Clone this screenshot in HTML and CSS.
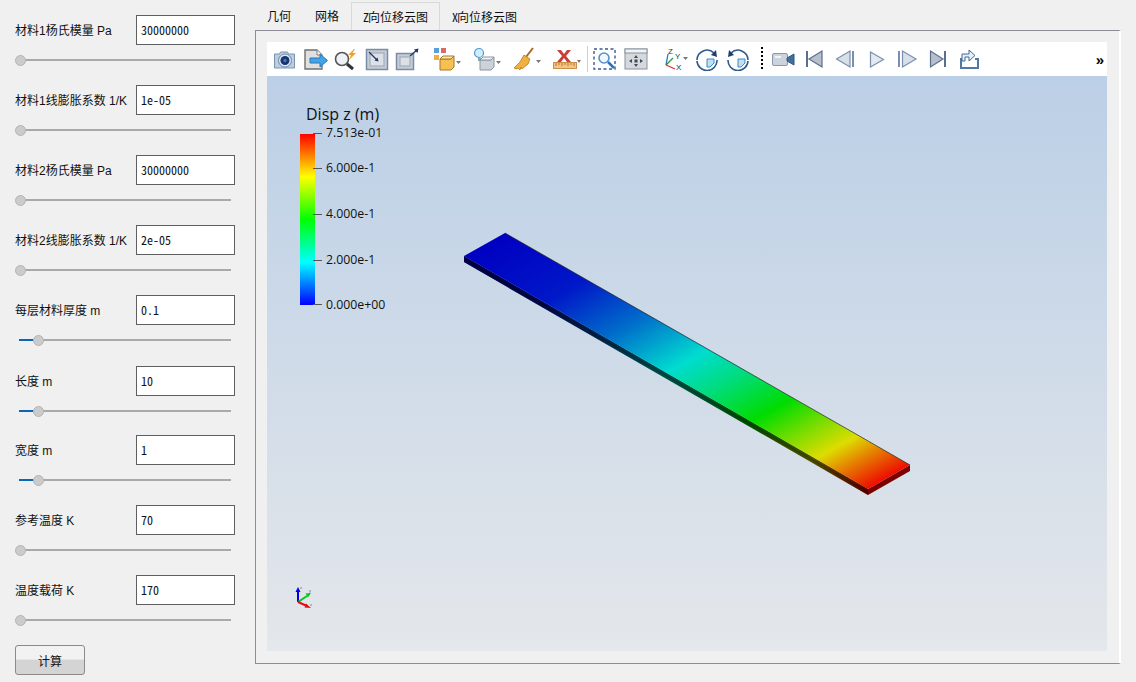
FILE: index.html
```html
<!DOCTYPE html>
<html lang="zh">
<head>
<meta charset="utf-8">
<title>Z向位移云图</title>
<link rel="stylesheet" href="styles.css">
</head>
<body>
<div class="app">
  <aside class="params">
    <div class="param"><div class="param-head"><label class="param-label">材料1杨氏模量 Pa</label><input class="param-input" value="30000000"></div><div class="slider"><div class="track"></div><div class="thumb"></div></div></div>
    <div class="param"><div class="param-head"><label class="param-label">材料1线膨胀系数 1/K</label><input class="param-input" value="1e-05"></div><div class="slider"><div class="track"></div><div class="thumb"></div></div></div>
    <div class="param"><div class="param-head"><label class="param-label">材料2杨氏模量 Pa</label><input class="param-input" value="30000000"></div><div class="slider"><div class="track"></div><div class="thumb"></div></div></div>
    <div class="param"><div class="param-head"><label class="param-label">材料2线膨胀系数 1/K</label><input class="param-input" value="2e-05"></div><div class="slider"><div class="track"></div><div class="thumb"></div></div></div>
    <div class="param param-tall"><div class="param-head"><label class="param-label">每层材料厚度 m</label><input class="param-input" value="0.1"></div><div class="slider"><div class="track"><div class="fill"></div></div><div class="thumb thumb-set"></div></div></div>
    <div class="param param-short"><div class="param-head"><label class="param-label">长度 m</label><input class="param-input" value="10"></div><div class="slider"><div class="track"><div class="fill"></div></div><div class="thumb thumb-set"></div></div></div>
    <div class="param"><div class="param-head"><label class="param-label">宽度 m</label><input class="param-input" value="1"></div><div class="slider"><div class="track"><div class="fill"></div></div><div class="thumb thumb-set"></div></div></div>
    <div class="param"><div class="param-head"><label class="param-label">参考温度 K</label><input class="param-input" value="70"></div><div class="slider"><div class="track"></div><div class="thumb"></div></div></div>
    <div class="param"><div class="param-head"><label class="param-label">温度载荷 K</label><input class="param-input" value="170"></div><div class="slider"><div class="track"></div><div class="thumb"></div></div></div>
    <button class="calc">计算</button>
  </aside>

  <main class="workspace">
    <nav class="tabs">
      <div class="tab">几何</div>
      <div class="tab">网格</div>
      <div class="tab tab-active"><span class="tab-latin">Z</span>向位移云图</div>
      <div class="tab"><span class="tab-latin">X</span>向位移云图</div>
    </nav>
    <section class="pane">
      <div class="toolbar">
        <div class="group group-a">
          <svg class="ic" viewBox="0 0 24 24"><path d="M1.500 7h5l1-2h7l1 2h6v14h-20z" fill="#b9cde3" stroke="#7b93b3"/><circle cx="12" cy="13.500" r="6.500" fill="#dfe8f2" stroke="#6f87a8"/><circle cx="12" cy="13.500" r="4.500" fill="#17366f"/><circle cx="12" cy="13.500" r="1.700" fill="#4a76b8"/></svg>
          <svg class="ic" viewBox="0 0 24 24"><path d="M1 3h12l5 5v14H1z" fill="#e0e0e0" stroke="#707070" stroke-width="1.400"/><path d="M13 3v5h5" fill="#f4f4f4" stroke="#808080"/><path d="M6 11h10V7l7.500 6.500L16 20v-4H6z" fill="#43a3e6" stroke="#2878b8"/></svg>
          <svg class="ic" viewBox="0 0 24 24"><circle cx="8" cy="12" r="6.500" fill="#eef2f6" stroke="#555" stroke-width="1.600"/><path d="M13 17l6 5" stroke="#333" stroke-width="3"/><path d="M20 2l-6 6h3l-2 5 7-7h-3.500l2.500-4z" fill="#f0a030"/></svg>
          <svg class="ic" viewBox="0 0 24 24"><rect x="1.500" y="2.500" width="21" height="20" fill="#c6ccd6" stroke="#7b8ca8" stroke-width="1.500"/><rect x="5" y="6" width="14" height="13" fill="#dde0e5" stroke="#9aa5b5"/><path d="M4 5l8 8" stroke="#1f3763" stroke-width="1.300"/><path d="M13.500 14.500l-4-1 3-3z" fill="#1f3763"/></svg>
          <svg class="ic" viewBox="0 0 24 24"><rect x="1.500" y="6.500" width="17" height="16" fill="#c6ccd6" stroke="#7b8ca8" stroke-width="1.500"/><rect x="5" y="10" width="10" height="9" fill="#dde0e5" stroke="#9aa5b5"/><path d="M15 9l7-6" stroke="#1f3763" stroke-width="1.300"/><path d="M23.500 1.500l-1 4.500-3.500-3.500z" fill="#1f3763"/></svg>
        </div>
        <div class="group group-b">
          <svg class="ic-wide" viewBox="0 0 28 24"><rect x="1" y="1" width="5" height="5" fill="#5aa0d8"/><rect x="8" y="1" width="5" height="5" fill="#d86a6a"/><rect x="1" y="8" width="5" height="5" fill="#f0b040"/><path d="M7 12h11l3-3v11l-3 3H7z" fill="#f8c050" stroke="#a07830"/><path d="M7 12l3-3h11l-3 3z" fill="#fde6a8" stroke="#a07830"/><path d="M23 14h5l-2.500 3z" fill="#777"/></svg>
          <svg class="ic-wide" viewBox="0 0 28 24"><circle cx="6" cy="6" r="4.500" fill="#d4ecfb" stroke="#4a9bd8" stroke-width="1.200"/><path d="M5 11h3v3H5z" fill="#8aa"/><path d="M7 13h11l3-3v10l-3 3H7z" fill="#ccd2d8" stroke="#8a96a2"/><path d="M7 13l3-3h11l-3 3z" fill="#eef1f4" stroke="#8a96a2"/><path d="M23 14h5l-2.500 3z" fill="#777"/></svg>
          <svg class="ic-wide" viewBox="0 0 28 24"><path d="M20 1l-7 9" stroke="#a8682a" stroke-width="2"/><path d="M11 8l6 4-2 5-6 5-1-2-1 3-2-2-2 1-2-1 6-6z" fill="#f2b040" stroke="#b07a20" stroke-width=".8"/><path d="M23 13h5l-2.500 3z" fill="#777"/></svg>
          <svg class="ic-wide" viewBox="0 0 28 24"><path d="M4 3h4l3 4 3-4h4l-5 6 5 6h-4l-3-4-3 4H4l5-6z" fill="#c8403a"/><rect x="0.500" y="15.500" width="23" height="6" fill="#f5c282" stroke="#c89048"/><path d="M3 16v3M6 16v2M9 16v3M12 16v2M15 16v3M18 16v2M21 16v3" stroke="#b07830"/><path d="M24 13h4l-2 3z" fill="#777"/></svg>
        </div>
        <div class="sep"></div>
        <div class="group group-c">
          <svg class="ic" viewBox="0 0 24 24"><rect x="1" y="2" width="21" height="20" fill="none" stroke="#3a5a90" stroke-width="1.400" stroke-dasharray="3 2.500"/><circle cx="11" cy="11" r="5" fill="#f0f6fb" stroke="#5a90c8" stroke-width="1.600"/><path d="M15 15l6 6" stroke="#2f74b8" stroke-width="2.500"/></svg>
          <svg class="ic" viewBox="0 0 24 24"><rect x="1" y="2" width="22" height="20" fill="#d6d8dc" stroke="#8892a2"/><rect x="1" y="2" width="22" height="4" fill="#f2f3f5" stroke="#8892a2"/><path d="M12 8l-2 3h4zM12 20l-2-3h4zM5 14l3-2v4zM19 14l-3-2v4z" fill="#3c4c62"/><rect x="10.500" y="12.500" width="3" height="3" fill="#3c4c62"/></svg>
        </div>
        <svg class="ic-axes" viewBox="0 0 27 24"><path d="M3 18L5 7" stroke="#2a7ac0" stroke-width="1.300"/><path d="M3 18l7-7" stroke="#2a9a40" stroke-width="1.300"/><path d="M3 18l9 4" stroke="#d83030" stroke-width="1.300"/><text class="axis-mini" x="5" y="7">Z</text><text class="axis-mini" x="12" y="12">Y</text><text class="axis-mini" x="13" y="23">X</text><path d="M20 10h5l-2.500 3z" fill="#777"/></svg>
        <div class="group group-rot">
          <svg class="ic" viewBox="0 0 24 24"><path d="M2 13a10 10 0 0 1 17-7M22 13a10 10 0 0 1-20 1" fill="none" stroke="#2e5a90" stroke-width="1.600"/><path d="M22 10l-6-2 5-5z" fill="#1f3f70"/><path d="M12 12h7v4l-4 4h-3z" fill="#bfe0f4" stroke="#3e8ac0"/></svg>
          <svg class="ic" viewBox="0 0 24 24"><path d="M22 13a10 10 0 0 0-17-7M2 13a10 10 0 0 0 20 1" fill="none" stroke="#2e5a90" stroke-width="1.600"/><path d="M2 10l6-2-5-5z" fill="#1f3f70"/><path d="M12 12h7v4l-4 4h-3z" fill="#bfe0f4" stroke="#3e8ac0"/></svg>
        </div>
        <div class="dots"></div>
        <svg class="ic-video" viewBox="0 0 26 24"><rect x="2.500" y="6.500" width="15" height="12" rx="1.500" fill="#ccd3dc" stroke="#8a98aa"/><rect x="5" y="9" width="6" height="2" fill="#f2f4f6"/><path d="M17 11l7-4v11l-7-4z" fill="#3f6f9f" stroke="#30567e"/></svg>
        <div class="group group-play">
          <svg class="ic" viewBox="0 0 24 24"><path d="M5 4v16" stroke="#5a6f8c" stroke-width="2"/><path d="M20 4v16L7 12z" fill="#b6bfcb" stroke="#5a6f8c" stroke-width="1.200"/></svg>
          <svg class="ic" viewBox="0 0 24 24"><path d="M17 4v16L3.500 12z" fill="#d8dfe8" stroke="#7a8fae" stroke-width="1.200"/><path d="M20 4v16" stroke="#7a8fae" stroke-width="2"/></svg>
          <svg class="ic" viewBox="0 0 24 24"><path d="M6.500 5v15L19.500 12.500z" fill="#e4e9f0" stroke="#7a8fae" stroke-width="1.200"/></svg>
          <svg class="ic" viewBox="0 0 24 24"><path d="M4 4v16" stroke="#7a8fae" stroke-width="2"/><path d="M7.500 4v16L21 12z" fill="#d8dfe8" stroke="#7a8fae" stroke-width="1.200"/></svg>
          <svg class="ic" viewBox="0 0 24 24"><path d="M4.500 4v16L17 12z" fill="#b6bfcb" stroke="#5a6f8c" stroke-width="1.200"/><path d="M19 4v16" stroke="#5a6f8c" stroke-width="2"/></svg>
          <svg class="ic" viewBox="0 0 24 24"><path d="M4 11v10h17v-9h-3" fill="none" stroke="#4f7aa8" stroke-width="2"/><path d="M5 14V7h7V3l6 5.500-6 5.500v-4H8v4z" fill="#e6eef6" stroke="#3f6a98"/></svg>
        </div>
        <div class="more">»</div>
      </div>
      <div class="render">
        <svg class="scene" viewBox="267 76 840 575">
          <defs>
            <linearGradient id="dispTop" gradientUnits="userSpaceOnUse" x1="464" y1="256" x2="660" y2="606">
              <stop offset="0" stop-color="#0000c2"/>
              <stop offset=".2" stop-color="#0018c8"/>
              <stop offset=".35" stop-color="#006cca"/>
              <stop offset=".5" stop-color="#00dcd0"/>
              <stop offset=".6" stop-color="#00dc78"/>
              <stop offset=".71" stop-color="#00dc00"/>
              <stop offset=".8" stop-color="#80dc00"/>
              <stop offset=".87" stop-color="#dedc00"/>
              <stop offset=".93" stop-color="#e67800"/>
              <stop offset="1" stop-color="#ee0a00"/>
            </linearGradient>
            <linearGradient id="legendBar" x1="0" y1="0" x2="0" y2="1">
              <stop offset="0" stop-color="#ff0000"/>
              <stop offset=".25" stop-color="#ffff00"/>
              <stop offset=".5" stop-color="#00ff00"/>
              <stop offset=".75" stop-color="#00ffff"/>
              <stop offset="1" stop-color="#0000ff"/>
            </linearGradient>
          </defs>
          <text class="legend-title" x="306" y="120">Disp z (m)</text>
          <rect x="300" y="134" width="15" height="171" fill="url(#legendBar)"/>
          <path class="legend-ticks" d="M313 133.500h9M313 168.500h9M313 214.500h9M313 260.500h9M313 304.500h9"/>
          <text class="legend-label" x="326" y="137">7.513e-01</text>
          <text class="legend-label" x="326" y="172">6.000e-1</text>
          <text class="legend-label" x="326" y="218">4.000e-1</text>
          <text class="legend-label" x="326" y="264">2.000e-1</text>
          <text class="legend-label" x="326" y="309">0.000e+00</text>

          <polygon points="464,256 868,489 868,495 464,262" fill="url(#dispTop)"/>
          <polygon points="464,256 868,489 868,495 464,262" fill="#000" opacity=".66"/>
          <polygon points="868,489 910,465 910,471 868,495" fill="#7c0000"/>
          <polygon points="464,256 505,233 910,465 868,489" fill="url(#dispTop)"/>
          <path d="M505 233L910 465" stroke="#222" stroke-width=".7" fill="none"/>
          <path d="M464 259L868 492" stroke="#000" stroke-width=".6" opacity=".4" fill="none"/>

          <path d="M298 602V590" stroke="#0000f0" stroke-width="2"/>
          <path d="M298 587l-2.500 5h5z" fill="#0000f0"/>
          <path d="M298 602l9-6" stroke="#10c020" stroke-width="2"/>
          <path d="M311 593l-5.500 .5 2.500 4z" fill="#10c020"/>
          <path d="M298 602l9 4" stroke="#e01010" stroke-width="2"/>
          <path d="M311 608l-5-4.500-1.500 4z" fill="#e01010"/>
          <text class="axis-tiny" x="300" y="589">z</text>
          <text class="axis-tiny" x="309" y="592">y</text>
          <text class="axis-tiny" x="310" y="606">x</text>
        </svg>
      </div>
    </section>
  </main>
</div>
</body>
</html>
```

FILE: styles.css
```css
* { box-sizing: border-box; }

html, body {
  margin: 0;
  width: 1136px;
  height: 682px;
  overflow: hidden;
  background: #f0f0f0;
}

body {
  font-family: "Liberation Sans", "Noto Sans CJK SC", sans-serif;
  font-size: 12px;
  color: #111;
}

.app {
  display: flex;
  height: 682px;
}

/* parameter column */
.params {
  width: 255px;
  flex: none;
  padding: 15px 0 0 15px;
}

.param {
  height: 70px;
}

.param-tall { height: 71px; }
.param-short { height: 69px; }

.param-head {
  display: flex;
  align-items: center;
  justify-content: space-between;
  width: 220px;
  height: 30px;
}

.param-label {
  white-space: nowrap;
  padding-bottom: 2px;
}

.param-input {
  width: 99px;
  height: 30px;
  padding: 0 0 2px 4px;
  border: 1px solid #5f5f5f;
  border-radius: 0;
  background: #fff;
  color: #111;
  font-family: "Noto Sans CJK SC", sans-serif;
  font-size: 12px;
  font-feature-settings: "hwid" 1;
  outline: none;
}

.slider {
  position: relative;
  width: 216px;
  height: 12px;
  margin-top: 9px;
  display: flex;
  align-items: center;
}

.track {
  width: 212px;
  height: 2px;
  margin-left: 4px;
  background: #a9a9a9;
}

.fill {
  width: 14px;
  height: 2px;
  background: #0b66b5;
}

.thumb {
  position: absolute;
  left: 0;
  top: 1px;
  width: 11px;
  height: 11px;
  border-radius: 50%;
  border: 1px solid #b4b4b4;
  background: #cbcbcb;
}

.thumb-set { left: 18px; }

.calc {
  display: block;
  width: 70px;
  height: 30px;
  padding: 0;
  border: 1px solid #8a8a8a;
  border-radius: 3px;
  background: linear-gradient(#f2f2f2 0, #f2f2f2 47%, #d4d4d4 50%, #d4d4d4 100%);
  color: #111;
  font: inherit;
}

/* tabs and pane */
.workspace {
  display: flex;
  flex-direction: column;
  width: 866px;
  flex: none;
}

.tabs {
  display: flex;
  height: 30px;
  padding-top: 2px;
}

.tab {
  padding: 0 12px;
  line-height: 30px;
  white-space: nowrap;
}

.tab-latin {
  font-family: "Noto Sans CJK SC", sans-serif;
  font-feature-settings: "hwid" 1;
  display: inline-block;
  width: 5px;
}

.tab-active {
  border: 1px solid #d9d9d9;
  border-bottom: 0;
  padding: 0 11px;
  line-height: 28px;
}

.pane {
  height: 634px;
  padding: 11px 12px 12px 11px;
  border-top: 1px solid #8c8c96;
  border-left: 1px solid #8c8c96;
  border-bottom: 1px solid #8c8c96;
  border-right: 2px solid #fff;
  display: flex;
  flex-direction: column;
}

/* toolbar */
.toolbar {
  display: flex;
  align-items: center;
  flex: none;
  height: 34px;
  padding-left: 6px;
  background: #fff;
}

.group { display: flex; align-items: center; }
.group-a { gap: 6.5px; }
.group-b { gap: 12px; margin-left: 14px; }
.group-c { gap: 7px; margin-left: 5px; }
.group-rot { gap: 7px; margin-left: 5px; }
.group-play { gap: 7px; margin-left: 6px; }

.ic { width: 24px; height: 24px; flex: none; display: block; }
.ic-wide { width: 28px; height: 24px; flex: none; display: block; }
.ic-axes { width: 27px; height: 24px; flex: none; display: block; margin-left: 15px; }
.ic-video { width: 26px; height: 24px; flex: none; display: block; margin-left: 7px; }

.sep {
  width: 1px;
  height: 26px;
  margin-left: 6px;
  background: #cfcfcf;
}

.dots {
  width: 2px;
  height: 24px;
  margin-left: 11px;
  background: repeating-linear-gradient(#000 0, #000 2px, transparent 2px, transparent 4px);
}

.more {
  margin-left: auto;
  padding-right: 3px;
  font-size: 15px;
  font-weight: bold;
  color: #000;
}

.axis-mini {
  font-family: "Liberation Sans", sans-serif;
  font-size: 8px;
  fill: #333;
}

/* 3D view */
.render {
  position: relative;
  flex: 1;
  background: linear-gradient(#bbcfe6, #e4e7eb);
}

.scene {
  position: absolute;
  inset: 0;
  width: 100%;
  height: 100%;
  display: block;
}

.legend-title {
  font-family: "Open Sans", sans-serif;
  font-size: 16px;
  fill: #111;
}

.legend-label {
  font-family: "Open Sans", sans-serif;
  font-size: 12.300px;
  fill: #111;
}

.legend-ticks {
  stroke: #555;
  stroke-width: 1;
  fill: none;
}

.axis-tiny {
  font-family: "Liberation Sans", sans-serif;
  font-size: 4px;
  fill: #666;
}
```
